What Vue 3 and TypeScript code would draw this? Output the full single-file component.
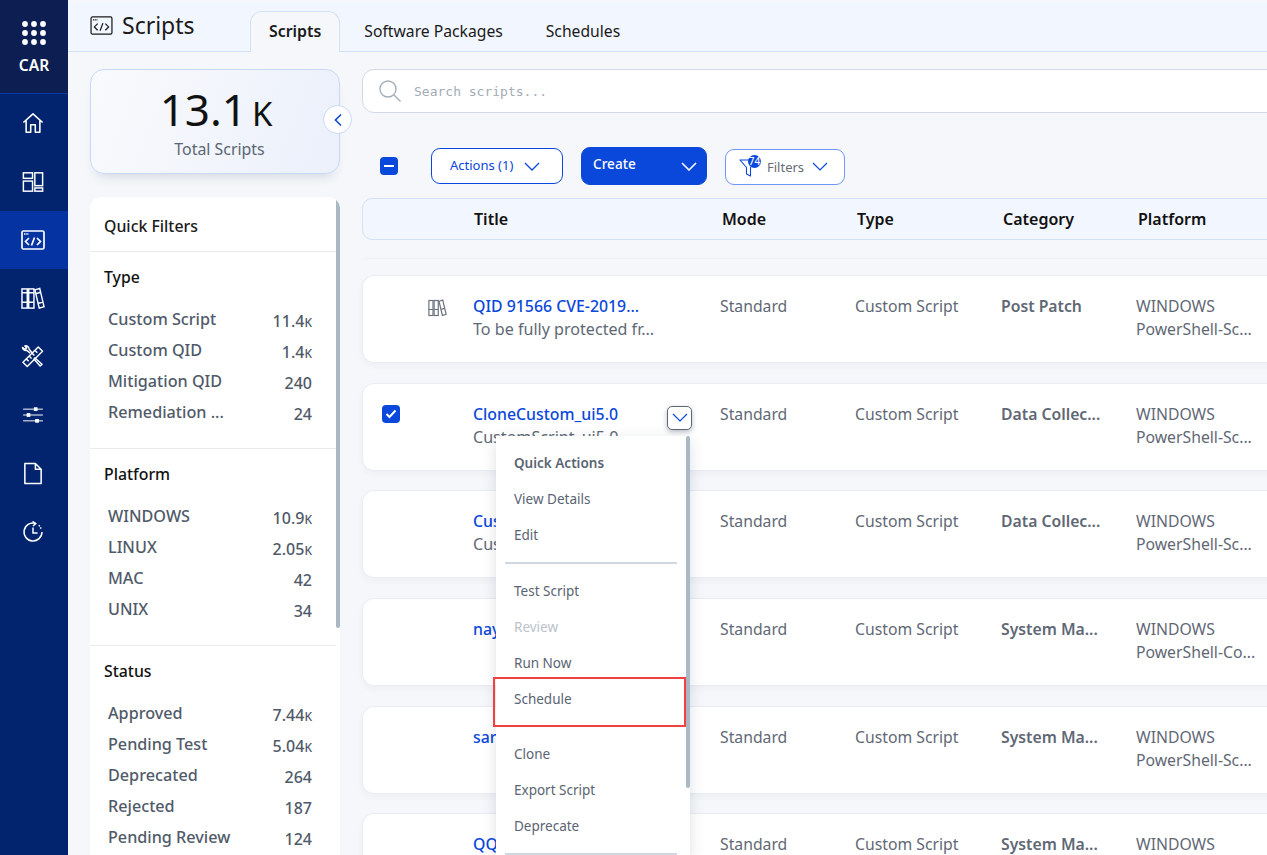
<template>
  <div class="app">
    <aside class="rail">
      <div class="rail-top">
        <svg class="dots" width="24" height="24" viewBox="0 0 24 24" fill="#fff">
          <template v-for="y in [3, 12, 21]" :key="y">
            <circle v-for="x in [3, 12, 21]" :key="x" :cx="x" :cy="y" r="2.9" />
          </template>
        </svg>
        <span class="org">CAR</span>
      </div>
      <nav class="rail-nav">
        <a class="rail-item">
          <svg width="22" height="22" viewBox="0 0 24 24" fill="none" stroke="#fff" stroke-width="1.700" stroke-linejoin="round">
            <path d="M1.500 11.500 12 2l10.500 9.500M4.500 9.500V22h5v-8h5v8h5V9.500" />
          </svg>
        </a>
        <a class="rail-item">
          <svg width="22" height="22" viewBox="0 0 24 24" fill="none" stroke="#fff" stroke-width="1.600">
            <rect x="1.500" y="2" width="10" height="6" />
            <rect x="1.500" y="11" width="10" height="11" />
            <rect x="14" y="2" width="8.500" height="14" />
            <rect x="14" y="18.500" width="8.500" height="3.500" />
          </svg>
        </a>
        <a class="rail-item active">
          <svg width="24" height="20" viewBox="0 0 24 20" fill="none" stroke="#fff" stroke-width="1.700">
            <rect x="1" y="1" width="22" height="18" rx="1.500" />
            <path d="M3 4h5" stroke-dasharray="1.500 .8" />
            <path d="m8 8-3.500 3.500L8 15M16 8l3.500 3.500L16 15M13.500 7.500l-3 8" />
          </svg>
        </a>
        <a class="rail-item">
          <svg width="24" height="23" viewBox="0 0 25 24" fill="none" stroke="#fff" stroke-width="1.500">
            <rect x="1" y="2" width="5.500" height="20" />
            <rect x="8" y="2" width="5.500" height="20" />
            <path d="m14.500 3 5-1.500 4.500 19-5 1.500zM1 6h5.500M8 6h5.500M1 16h5.500M8 16h5.500M15.500 7l5-1.500M18.500 17l5-1.500" />
          </svg>
        </a>
        <a class="rail-item">
          <svg width="23" height="23" viewBox="0 0 24 24" fill="none" stroke="#fff" stroke-width="1.500" stroke-linejoin="round">
            <path d="m18 2 4.500 4.500L6.500 22.500 2 18zM15 6l2 2M12 9l2 2M9 12l2 2M6 15l2 2" />
            <path d="M9.500 8.500 6 5.500A3.500 3.500 0 0 1 1.500 2.500l2.500 2 2-1.500L4 1a3.500 3.500 0 0 1 4.500 3.500l3 3.500M14 13l8 7-2 2-7-8" />
          </svg>
        </a>
        <a class="rail-item">
          <svg width="22" height="18" viewBox="0 0 24 20" fill="#fff" stroke="#fff" stroke-width="1.100">
            <path d="M1 3.500h22M1 10h22M1 16.500h22" />
            <rect x="13.500" y="2" width="3" height="3" />
            <rect x="5.500" y="8.500" width="3" height="3" />
            <rect x="15" y="15" width="3" height="3" />
          </svg>
        </a>
        <a class="rail-item">
          <svg width="20" height="23" viewBox="0 0 20 24" fill="none" stroke="#fff" stroke-width="1.600" stroke-linejoin="round">
            <path d="M1.500 1.500h11l6 6v15h-17zM12.500 1.500v6h6" />
          </svg>
        </a>
        <a class="rail-item">
          <svg width="22" height="22" viewBox="0 0 24 24" fill="none" stroke="#fff" stroke-width="1.600">
            <path d="M14.500 2.500A9.800 9.800 0 1 0 21.800 12" />
            <path d="M11.500 .5 15 2.800 12 5.500" />
            <path d="M18.500 4.500l2.800 4.500" stroke-dasharray="1.500 1.500" />
            <path d="M12 7v6h5" />
          </svg>
        </a>
      </nav>
    </aside>

    <main class="main">
      <header class="topbar">
        <div class="page-title">
          <svg width="23" height="19" viewBox="0 0 24 20" fill="none" stroke="#1a1a1a" stroke-width="1.300">
            <rect x="1" y="1" width="22" height="18" rx="1.500" />
            <path d="M3 4h5" stroke-dasharray="1.500 .8" />
            <path d="m8 8-3.500 3.500L8 15M16 8l3.500 3.500L16 15M13.500 7.500l-3 8" />
          </svg>
          <h1>Scripts</h1>
        </div>
        <div class="tabs">
          <button v-for="tab in tabs" :key="tab" class="tab" :class="{ active: tab === 'Scripts' }">{{ tab }}</button>
        </div>
      </header>

      <div class="content">
        <section class="left">
          <div class="stat-card">
            <div class="stat-value">13.1<span>K</span></div>
            <div class="stat-label">Total Scripts</div>
            <button class="collapse">
              <svg width="10" height="14" viewBox="0 0 10 14" fill="none" stroke="#0a47db" stroke-width="1.600">
                <path d="M8 1.500 2.500 7 8 12.500" />
              </svg>
            </button>
          </div>
          <div class="filters">
            <div class="filters-title">Quick Filters</div>
            <div v-for="group in filterGroups" :key="group.name" class="filter-group">
              <h3>{{ group.name }}</h3>
              <div v-for="row in group.rows" :key="row.label" class="filter-row">
                <span class="filter-label">{{ row.label }}</span>
                <span class="filter-count">{{ row.count }}<small v-if="row.k">K</small></span>
              </div>
            </div>
            <div class="panel-scroll"></div>
          </div>
        </section>

        <section class="right">
          <div class="search">
            <svg width="24" height="24" viewBox="0 0 24 24" fill="none" stroke="#a4afbd" stroke-width="1.400">
              <circle cx="10" cy="10" r="8" />
              <path d="m16 16 6.500 6.500" />
            </svg>
            <span>Search scripts...</span>
          </div>

          <div class="toolbar">
            <span class="check partial"><i></i></span>
            <button class="btn btn-actions">
              Actions (1)
              <svg width="16" height="9" viewBox="0 0 16 9" fill="none" stroke="#0a47db" stroke-width="1.300"><path d="m1 1 7 7 7-7" /></svg>
            </button>
            <button class="btn btn-create">
              Create
              <svg width="16" height="9" viewBox="0 0 16 9" fill="none" stroke="#fff" stroke-width="1.600"><path d="m1 1 7 7 7-7" /></svg>
            </button>
            <button class="btn btn-filters">
              <span class="funnel">
                <svg width="20" height="20" viewBox="0 0 20 20" fill="none" stroke="#0a47db" stroke-width="1.100" stroke-linejoin="round">
                  <path d="M1 3h17l-6.500 7.500V19l-4-2v-6.500z" />
                </svg>
                <b>74</b>
              </span>
              <span class="filters-text">Filters</span>
              <svg width="16" height="9" viewBox="0 0 16 9" fill="none" stroke="#0a47db" stroke-width="1.200"><path d="m1 1 7 7 7-7" /></svg>
            </button>
          </div>

          <div class="table-head">
            <span></span>
            <span>Title</span>
            <span>Mode</span>
            <span>Type</span>
            <span>Category</span>
            <span>Platform</span>
          </div>

          <div class="list">
            <div v-for="(row, i) in rows" :key="i" class="card">
              <div class="cell-lead">
                <span v-if="row.checked" class="check">
                  <svg width="12" height="10" viewBox="0 0 12 10" fill="none" stroke="#fff" stroke-width="2"><path d="m1.500 5 3 3 6-6.500" /></svg>
                </span>
                <svg v-if="row.library" class="lib" width="19" height="18" viewBox="0 0 25 24" fill="none" stroke="#6b7280" stroke-width="1.600">
                  <rect x="1" y="2" width="5.500" height="20" />
                  <rect x="8" y="2" width="5.500" height="20" />
                  <path d="m14.500 3 5-1.500 4.500 19-5 1.500zM1 14h5.500M8 14h5.500M17 14l5-1.500" />
                </svg>
              </div>
              <div class="cell-title">
                <a class="title">{{ row.title }}</a>
                <p class="desc">{{ row.desc }}</p>
                <button v-if="row.checked" class="row-menu">
                  <svg width="16" height="9" viewBox="0 0 16 9" fill="none" stroke="#0a47db" stroke-width="1.200"><path d="m1 1 7 7 7-7" /></svg>
                </button>
              </div>
              <div>Standard</div>
              <div>Custom Script</div>
              <div class="category">{{ row.category }}</div>
              <div>WINDOWS<br />{{ row.platform }}</div>
            </div>

            <div class="menu">
              <div class="menu-item menu-head">Quick Actions</div>
              <div class="menu-item">View Details</div>
              <div class="menu-item">Edit</div>
              <hr />
              <div class="menu-item">Test Script</div>
              <div class="menu-item disabled">Review</div>
              <div class="menu-item">Run Now</div>
              <div class="menu-item">Schedule</div>
              <div class="menu-gap"></div>
              <div class="menu-item">Clone</div>
              <div class="menu-item">Export Script</div>
              <div class="menu-item">Deprecate</div>
              <hr />
              <div class="menu-scroll"></div>
              <div class="highlight"></div>
            </div>
          </div>
        </section>
      </div>
    </main>
  </div>
</template>

<script setup lang="ts">
interface FilterRow {
  label: string;
  count: string;
  k?: boolean;
}

interface ScriptRow {
  title: string;
  desc: string;
  category: string;
  platform: string;
  checked?: boolean;
  library?: boolean;
}

const tabs = ["Scripts", "Software Packages", "Schedules"];

const filterGroups: { name: string; rows: FilterRow[] }[] = [
  {
    name: "Type",
    rows: [
      { label: "Custom Script", count: "11.4", k: true },
      { label: "Custom QID", count: "1.4", k: true },
      { label: "Mitigation QID", count: "240" },
      { label: "Remediation ...", count: "24" },
    ],
  },
  {
    name: "Platform",
    rows: [
      { label: "WINDOWS", count: "10.9", k: true },
      { label: "LINUX", count: "2.05", k: true },
      { label: "MAC", count: "42" },
      { label: "UNIX", count: "34" },
    ],
  },
  {
    name: "Status",
    rows: [
      { label: "Approved", count: "7.44", k: true },
      { label: "Pending Test", count: "5.04", k: true },
      { label: "Deprecated", count: "264" },
      { label: "Rejected", count: "187" },
      { label: "Pending Review", count: "124" },
    ],
  },
];

const rows: ScriptRow[] = [
  { title: "QID 91566 CVE-2019...", desc: "To be fully protected fr...", category: "Post Patch", platform: "PowerShell-Sc...", library: true },
  { title: "CloneCustom_ui5.0", desc: "CustomScript_ui5.0", category: "Data Collec...", platform: "PowerShell-Sc...", checked: true },
  { title: "CustomScript_ui5.0", desc: "CustomScript_ui5.0", category: "Data Collec...", platform: "PowerShell-Sc..." },
  { title: "nayana_test", desc: "", category: "System Ma...", platform: "PowerShell-Co..." },
  { title: "sarita_script", desc: "", category: "System Ma...", platform: "PowerShell-Sc..." },
  { title: "QQ_script", desc: "", category: "System Ma...", platform: "PowerShell-Sc..." },
];
</script>

<style>
html,
body {
  margin: 0;
  overflow: hidden;
}
</style>

<style scoped>
.app {
  display: flex;
  height: 855px;
  overflow: hidden;
  background: #f5f7fa;
  font-family: "Noto Sans", sans-serif;
  color: #1a1a1a;
}

.rail {
  flex: 0 0 68px;
  background: #02246f;
}

.rail-top {
  height: 72px;
  display: flex;
  flex-direction: column;
  align-items: center;
  padding-top: 21px;
  background: #0d1f52;
  border-bottom: 1px solid #0a3aa8;
}

.org {
  margin-top: 9px;
  color: #fff;
  font-size: 15.500px;
  font-weight: 600;
}

.rail-nav {
  display: flex;
  flex-direction: column;
}

.rail-item {
  height: 58.400px;
  padding-right: 3px;
  box-sizing: border-box;
  display: flex;
  align-items: center;
  justify-content: center;
}

.rail-item.active {
  background: #0534a2;
}

.main {
  flex: 1;
  min-width: 0;
  display: flex;
  flex-direction: column;
}

.topbar {
  height: 49px;
  padding: 0 0 0 22px;
  margin-top: 2px;
  display: flex;
  align-items: flex-end;
  background: #f2f6fe;
  border-bottom: 1px solid #d3e0f8;
}

.page-title {
  width: 160px;
  align-self: center;
  margin-top: -3px;
  display: flex;
  align-items: center;
  gap: 9px;
}

.page-title h1 {
  margin: 0;
  font-size: 23px;
  font-weight: 400;
  line-height: 30px;
}

.tabs {
  display: flex;
  margin-bottom: -1px;
}

.tab {
  height: 41px;
  padding: 0 19px 2px;
  margin-right: 3px;
  border: 1px solid transparent;
  border-bottom: 0;
  border-radius: 12px 12px 0 0;
  background: none;
  font: 400 15.700px "Noto Sans", sans-serif;
  color: #1a1a1a;
}

.tab.active {
  padding: 0 18px 2px;
  margin-right: 4px;
  background: #f5f7fa;
  border-color: #d3e0f8;
  font-size: 15.900px;
  font-weight: 600;
}

.content {
  flex: 1;
  min-height: 0;
  display: flex;
  gap: 22px;
  padding: 17px 0 0 22px;
}

.left {
  flex: 0 0 250px;
  display: flex;
  flex-direction: column;
}

.stat-card {
  position: relative;
  height: 105px;
  box-sizing: border-box;
  padding-top: 10px;
  text-align: center;
  border: 1px solid #c8d9f8;
  border-radius: 14px;
  background: linear-gradient(110deg, #f9fafc, #ebf0fb);
  box-shadow: 0 8px 12px -6px rgba(30, 50, 90, 0.16);
}

.stat-value {
  font-size: 44px;
  line-height: 58px;
  color: #111;
  margin-left: 2px;
}

.stat-value span {
  font-size: 33px;
  margin-left: 5px;
}

.stat-label {
  margin-top: -4px;
  padding-left: 9px;
  font-size: 15.900px;
  line-height: 20px;
  color: #5b6573;
}

.collapse {
  position: absolute;
  right: -13px;
  top: 35px;
  width: 29px;
  height: 29px;
  padding: 0;
  display: flex;
  align-items: center;
  justify-content: center;
  border-radius: 50%;
  border: 1px solid #c8d9f8;
  background: #fff;
}

.filters {
  position: relative;
  flex: 1;
  margin-top: 23px;
  padding-right: 4px;
  background: #fff;
  border-radius: 12px 12px 0 0;
  overflow: hidden;
}

.filters-title {
  height: 55px;
  padding: 3px 14px 0;
  box-sizing: border-box;
  display: flex;
  align-items: center;
  font-size: 15.850px;
  font-weight: 500;
  border-bottom: 1px solid #e8eaee;
}

.filter-group {
  padding: 13px 14px 17px;
  border-bottom: 1px solid #e8eaee;
}

.filter-group h3 {
  margin: 0 0 18px;
  font-size: 15.850px;
  font-weight: 500;
  line-height: 24px;
  color: #111;
}

.filter-row {
  height: 31px;
  padding: 0 10px 0 4px;
  display: flex;
  justify-content: space-between;
  font-size: 16.200px;
  font-weight: 500;
  line-height: 24px;
  color: #505a69;
}

.filter-count {
  margin-top: 2px;
  font-size: 16px;
}

.filter-count small {
  font-size: 12px;
}

.panel-scroll {
  position: absolute;
  top: 0;
  right: 0;
  width: 4px;
  height: 431px;
  background: #aab7c4;
  border-radius: 2px;
}

.right {
  flex: 1;
  min-width: 0;
  margin-right: -30px;
  display: flex;
  flex-direction: column;
}

.search {
  height: 44px;
  box-sizing: border-box;
  padding-left: 15px;
  display: flex;
  align-items: center;
  gap: 12px;
  background: #fff;
  border: 1px solid #d3d9e3;
  border-radius: 12px;
  font: 13px "DejaVu Sans Mono", monospace;
  color: #a3abb6;
}

.toolbar {
  height: 38px;
  margin-top: 34px;
  padding-left: 18px;
  display: flex;
  align-items: center;
}

.check {
  width: 18px;
  height: 18px;
  flex: none;
  display: inline-flex;
  align-items: center;
  justify-content: center;
  background: #0a47db;
  border-radius: 4px;
}

.check i {
  width: 10px;
  height: 2px;
  background: #fff;
}

.btn {
  box-sizing: border-box;
  display: flex;
  align-items: center;
  font: 13px "Noto Sans", sans-serif;
  background: #fff;
  border-radius: 9px;
  padding: 0;
}

.btn-actions {
  margin-left: 33px;
  width: 132px;
  height: 36px;
  padding: 0 0 2px 18px;
  gap: 11px;
  color: #0a47db;
  border: 1px solid #0a47db;
}

.btn-create {
  margin-left: 18px;
  width: 126px;
  height: 38px;
  padding: 0 9px 5px 11px;
  justify-content: space-between;
  color: #fff;
  font-size: 13.600px;
  font-weight: 500;
  background: #0a47db;
  border: 1px solid #0a47db;
}

.btn-create svg {
  margin-top: 5px;
}

.btn-actions svg {
  margin-top: 2px;
}

.btn-filters {
  margin-left: 18px;
  width: 120px;
  height: 36px;
  margin-top: 1px;
  padding-left: 13px;
  border: 1px solid #6f97f3;
  color: #666c75;
}

.btn-filters > svg {
  margin-left: 8px;
}

.funnel {
  position: relative;
  display: flex;
  width: 28px;
  height: 20px;
}

.funnel b {
  position: absolute;
  left: 9px;
  top: -2px;
  width: 13px;
  height: 13px;
  line-height: 13px;
  text-align: center;
  border-radius: 50%;
  background: #0a47db;
  color: #fff;
  font-size: 10px;
  font-weight: 500;
}

.table-head,
.card {
  display: grid;
  grid-template-columns: 110px 247px 135px 146px 135px 1fr;
}

.table-head {
  height: 42px;
  margin-top: 13px;
  box-sizing: border-box;
  align-items: center;
  background: #f2f6fe;
  border: 1px solid #d3e0f8;
  border-radius: 10px;
  font-size: 16px;
  font-weight: 600;
  color: #111;
  margin-bottom: 18px;
}

.table-head span {
  padding-left: 2px;
}

.table-head span:nth-child(2) {
  padding-left: 1px;
}

.list {
  position: relative;
  flex: 1;
  min-height: 0;
  display: flex;
  flex-direction: column;
  gap: 19.700px;
  padding-top: 16px;
  border-top: 1px solid #eff1f4;
}

.card {
  flex: none;
  height: 88px;
  box-sizing: border-box;
  padding-top: 19px;
  background: #fff;
  border: 1px solid #e9edf3;
  border-radius: 12px;
  box-shadow: 0 3px 6px rgba(40, 50, 70, 0.04);
  font-size: 15.750px;
  line-height: 23px;
  color: #5f6875;
}

.cell-lead {
  padding-left: 19px;
  display: flex;
  align-items: flex-start;
}

.cell-lead .check {
  margin-top: 2px;
}

.lib {
  margin: 4px 0 0 46px;
}

.cell-title {
  position: relative;
}

.title {
  display: block;
  color: #0a47db;
  font-size: 15.850px;
  font-weight: 500;
}

.desc {
  margin: 0;
  font-size: 16.100px;
}

.category {
  font-weight: 600;
}

.row-menu {
  position: absolute;
  left: 194px;
  top: 3px;
  width: 25px;
  height: 24px;
  padding: 0;
  display: flex;
  align-items: center;
  justify-content: center;
  background: #fff;
  border: 1px solid #5f6875;
  border-radius: 5px;
  box-shadow: 0 2px 5px rgba(30, 40, 70, 0.3);
}

.menu {
  position: absolute;
  left: 134px;
  top: 177px;
  width: 194px;
  height: 420px;
  padding: 9px 0 0;
  box-sizing: border-box;
  background: #fff;
  box-shadow: 0 4px 14px rgba(30, 40, 70, 0.14);
  font-size: 13.500px;
  color: #5a6472;
}

.menu-item {
  height: 36px;
  line-height: 36px;
  padding-left: 18px;
}

.menu-head {
  font-weight: 600;
}

.menu-gap {
  height: 19px;
}

.disabled {
  color: #bcc2ca;
}

.menu hr {
  height: 2px;
  margin: 9px 13px 9px 9px;
  border: 0;
  background: #d1d7e0;
}

.menu-scroll {
  position: absolute;
  top: 0;
  right: 0;
  width: 4px;
  height: 352px;
  background: #aab7c4;
  border-radius: 2px;
}

.highlight {
  position: absolute;
  left: -3px;
  top: 241px;
  width: 193px;
  height: 50px;
  box-sizing: border-box;
  border: 2px solid #f24141;
}
</style>
